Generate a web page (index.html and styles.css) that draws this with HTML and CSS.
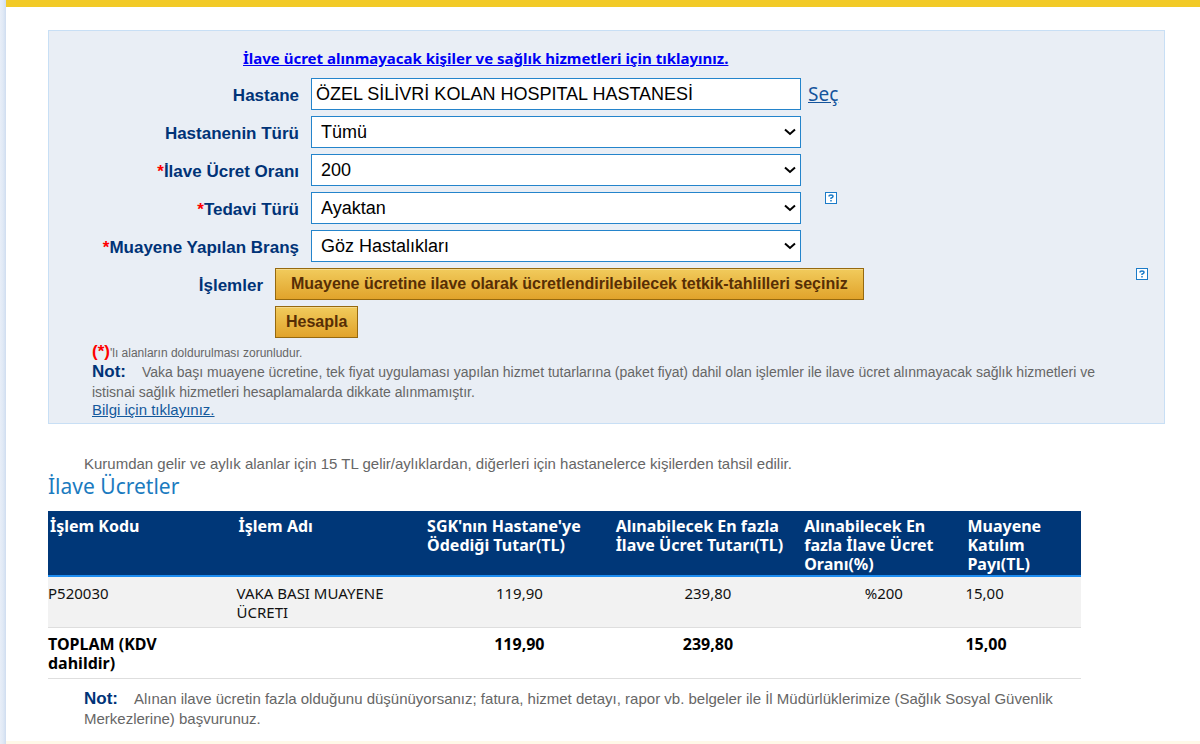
FILE: index.html
```html
<!DOCTYPE html>
<html lang="tr">
<head>
<meta charset="utf-8">
<title>İlave Ücret Hesaplama</title>
<link rel="stylesheet" href="styles.css">
</head>
<body>
<main class="page">
  <form class="panel">
    <p class="exempt"><a href="#">İlave ücret alınmayacak kişiler ve sağlık hizmetleri için tıklayınız.</a></p>
    <div class="row">
      <label class="label" for="hospital">Hastane</label>
      <input class="field" id="hospital" type="text" value="ÖZEL SİLİVRİ KOLAN HOSPITAL HASTANESİ">
      <a class="pick" href="#">Seç</a>
    </div>
    <div class="row">
      <label class="label" for="kind">Hastanenin Türü</label>
      <div class="select"><select class="field" id="kind"><option>Tümü</option></select><svg class="chevron" viewBox="0 0 12 8"><path d="M1 1.5l5 4.500 5-4.500"/></svg></div>
    </div>
    <div class="row">
      <label class="label" for="rate"><span class="star">*</span>İlave Ücret Oranı</label>
      <div class="select"><select class="field" id="rate"><option>200</option></select><svg class="chevron" viewBox="0 0 12 8"><path d="M1 1.5l5 4.500 5-4.500"/></svg></div>
    </div>
    <div class="row">
      <label class="label" for="treatment"><span class="star">*</span>Tedavi Türü</label>
      <div class="select"><select class="field" id="treatment"><option>Ayaktan</option></select><svg class="chevron" viewBox="0 0 12 8"><path d="M1 1.5l5 4.500 5-4.500"/></svg></div>
      <svg class="help" viewBox="0 0 12 12" role="img" aria-label="Yardım"><rect x=".5" y=".5" width="11" height="11"/><path d="M4 4.500Q4 3 6 3T8 4.500Q8 5.300 6 6.200V7M6 8v1.500"/></svg>
    </div>
    <div class="row">
      <label class="label" for="branch"><span class="star">*</span>Muayene Yapılan Branş</label>
      <div class="select"><select class="field" id="branch"><option>Göz Hastalıkları</option></select><svg class="chevron" viewBox="0 0 12 8"><path d="M1 1.5l5 4.500 5-4.500"/></svg></div>
    </div>
    <div class="row actions">
      <label class="label" for="tests">İşlemler</label>
      <button class="button wide" id="tests" type="button">Muayene ücretine ilave olarak ücretlendirilebilecek tetkik-tahlilleri seçiniz</button>
      <svg class="help last" viewBox="0 0 12 12" role="img" aria-label="Yardım"><rect x=".5" y=".5" width="11" height="11"/><path d="M4 4.500Q4 3 6 3T8 4.500Q8 5.300 6 6.200V7M6 8v1.500"/></svg>
    </div>
    <div class="row actions">
      <span class="label"></span>
      <button class="button" type="button">Hesapla</button>
    </div>
    <div class="notes">
      <p class="required"><b>(*)</b>'lı alanların doldurulması zorunludur.</p>
      <p class="note"><strong>Not:</strong>Vaka başı muayene ücretine, tek fiyat uygulaması yapılan hizmet tutarlarına (paket fiyat) dahil olan işlemler ile ilave ücret alınmayacak sağlık hizmetleri ve istisnai sağlık hizmetleri hesaplamalarda dikkate alınmamıştır.</p>
      <a class="info" href="#">Bilgi için tıklayınız.</a>
    </div>
  </form>
  <section class="results">
    <p class="note indent">Kurumdan gelir ve aylık alanlar için 15 TL gelir/aylıklardan, diğerleri için hastanelerce kişilerden tahsil edilir.</p>
    <h2 class="heading">İlave Ücretler</h2>
    <table class="fees">
      <colgroup><col class="c-wide"><col class="c-wide"><col class="c-wide"><col class="c-wide"><col class="c-rate"><col class="c-share"></colgroup>
      <thead>
        <tr><th>İşlem Kodu</th><th>İşlem Adı</th><th>SGK'nın Hastane'ye Ödediği Tutar(TL)</th><th>Alınabilecek En fazla İlave Ücret Tutarı(TL)</th><th>Alınabilecek En fazla İlave Ücret Oranı(%)</th><th>Muayene Katılım Payı(TL)</th></tr>
      </thead>
      <tbody>
        <tr class="item"><td>P520030</td><td>VAKA BASI MUAYENE ÜCRETI</td><td class="num">119,90</td><td class="num">239,80</td><td class="num">%200</td><td>15,00</td></tr>
        <tr class="total"><td>TOPLAM (KDV dahildir)</td><td></td><td class="num">119,90</td><td class="num">239,80</td><td></td><td>15,00</td></tr>
      </tbody>
    </table>
    <p class="note indent closing"><strong>Not:</strong>Alınan ilave ücretin fazla olduğunu düşünüyorsanız; fatura, hizmet detayı, rapor vb. belgeler ile İl Müdürlüklerimize (Sağlık Sosyal Güvenlik Merkezlerine) başvurunuz.</p>
  </section>
  <div class="footer"></div>
</main>
</body>
</html>
```
FILE: styles.css
```css
* { box-sizing: border-box; }
body {
  margin: 0;
  padding-left: 6px;
  background: linear-gradient(to right, #e8eef8 0, #e0e9f5 3px, #cfddf0 6px);
  font-family: "Liberation Sans", Arial, sans-serif;
}
p, h2 { margin: 0; }
.page {
  min-height: 100vh;
  border-top: 7px solid #f2ca27;
  background: #fff;
  padding: 23px 35px 0 42px;
}
.panel {
  background: #e9eef5;
  border: 1px solid #c8dff5;
  padding: 17px 16px 5px 0;
}
.exempt {
  padding-left: 194px;
  margin-bottom: 10px;
  font: bold 15px/20px "Noto Sans", Tahoma, sans-serif;
}
.exempt a { color: #0000f5; }
.row {
  display: flex;
  align-items: center;
  height: 32px;
  margin-bottom: 6px;
}
.label {
  width: 262px;
  padding: 4px 12px 0 0;
  flex: none;
  text-align: right;
  font-weight: bold;
  font-size: 17px;
  line-height: 20px;
  color: #003377;
}
.actions .label { width: 226px; }
.star { color: #f00; }
.field {
  width: 490px;
  height: 32px;
  border: 1px solid #2484cb;
  border-radius: 0;
  background: #fff;
  color: #000;
  font: 18px "Liberation Sans", Arial, sans-serif;
  padding: 0 4px;
}
select.field { appearance: none; padding: 0 9px; display: block; }
.select { position: relative; }
.chevron {
  position: absolute;
  right: 5px;
  top: 12px;
  width: 12px;
  height: 8px;
  fill: none;
  stroke: #000;
  stroke-width: 2;
  pointer-events: none;
}
.pick {
  margin-left: 7px;
  color: #14549c;
  font: 19px/24px "Noto Sans", Tahoma, sans-serif;
}
.help {
  width: 12px;
  height: 12px;
  margin: 0 0 20px 24px;
  fill: #fff;
  stroke: #1b7bc8;
  stroke-width: 1;
}
.help path { fill: none; stroke-width: 1.500; }
.help.last { margin-left: auto; }
.button {
  height: 32px;
  padding: 0 10px;
  border: 1px solid #96690f;
  background: linear-gradient(#f1cb5c, #e1a32b);
  box-shadow: inset 0 1px #f4d98b;
  color: #572e05;
  font: bold 16px "Liberation Sans", Arial, sans-serif;
}
.button.wide { padding: 0 15px; }
.notes { padding: 0 12px 0 43px; }
.required { font-size: 12px; line-height: 18px; color: #666; }
.required b { color: #f00; font-size: 17px; line-height: 16px; }
.note { font-size: 15px; line-height: 20px; color: #666; }
.notes .note { font-size: 14px; }
.note strong { margin-right: 16px; font-size: 17px; line-height: 16px; color: #003377; }
.info { display: block; font-size: 15px; line-height: 16px; color: #14599c; }
.results { padding-top: 30px; width: 92.5%; }
.indent { padding-left: 36px; }
.heading {
  color: #1b7bbf;
  font: 21px/24px "Noto Sans", Tahoma, sans-serif;
  margin-bottom: 13px;
}
.fees {
  width: 100%;
  table-layout: fixed;
  border-collapse: collapse;
  font: 15px/19px "Noto Sans", Tahoma, sans-serif;
  color: #111;
}
.c-wide { width: 18.250%; }
.c-rate { width: 15.800%; }
.c-share { width: 11.200%; }
.fees th {
  padding: 6px 8px 1px 2px;
  background: #003778;
  border-bottom: 2px solid #1d8cf0;
  color: #fff;
  font-size: 16px;
  text-align: left;
  vertical-align: top;
}
.fees td { padding: 7px 0 5px; border-bottom: 1px solid #dedede; vertical-align: top; }
.fees td:first-child { padding-right: 20px; }
.fees .num { text-align: center; }
.item { background: #f2f2f2; }
.total { font-weight: bold; font-size: 16px; color: #000; }
.closing { padding-top: 10px; }
.footer { height: 4px; margin: 12px -35px 0 -42px; background: #fff9e8; }
```
